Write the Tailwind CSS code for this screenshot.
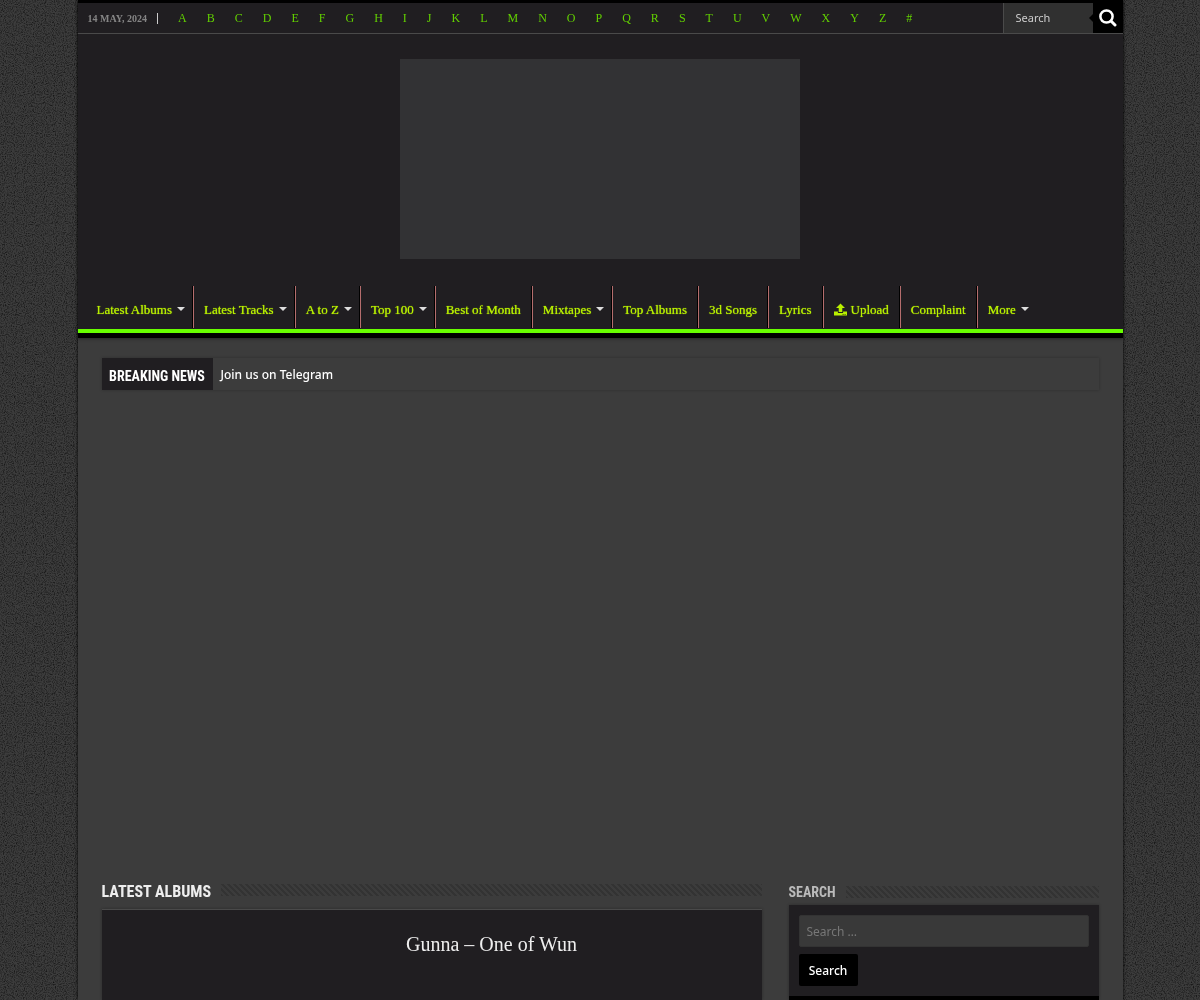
<!DOCTYPE html>
<html lang="en">
<head>
<meta charset="utf-8">
<meta name="viewport" content="width=device-width, initial-scale=1">
<title>Latest Albums</title>
<script src="https://cdn.jsdelivr.net/npm/@tailwindcss/browser@4"></script>
</head>
<body class="min-h-screen bg-[#363636] font-['Noto_Sans','Open_Sans',sans-serif] text-white">
<!-- Grainy page backdrop -->
<svg class="fixed inset-0 -z-10 h-full w-full" aria-hidden="true">
  <filter id="grain" x="0" y="0" width="100%" height="100%">
    <feTurbulence type="fractalNoise" baseFrequency="0.9" numOctaves="2" seed="4" stitchTiles="stitch"/>
    <feColorMatrix values="0 0 0 0 0  0 0 0 0 0  0 0 0 0 0  1.4 0 0 0 -0.58"/>
  </filter>
  <rect width="100%" height="100%" fill="#3c3c3c"/>
  <rect width="100%" height="100%" filter="url(#grain)"/>
</svg>

<div class="mx-auto flex min-h-screen max-w-[1045px] flex-col bg-[#3c3c3c] shadow-[0_0_3px_#000]">
  <header class="border-b-5 border-black bg-[#201e21] shadow-[0_1px_3px_rgba(0,0,0,0.4)]">
    <div class="flex h-[34px] border-t-3 border-b border-t-black border-b-[#4a4a4a] font-['Liberation_Serif',serif]">
      <div class="flex flex-1 items-center pl-[10px]">
        <span class="text-[10px] font-bold whitespace-nowrap text-[#858585]">14 MAY, 2024</span>
        <span class="ml-[10px] h-[11px] w-px bg-[#ccc]"></span>
        <nav class="ml-5 flex gap-5 text-xs text-[#62d000]" aria-label="Artists by letter">
          <a href="#">A</a><a href="#">B</a><a href="#">C</a><a href="#">D</a><a href="#">E</a><a href="#">F</a><a href="#">G</a><a href="#">H</a><a href="#">I</a><a href="#">J</a><a href="#">K</a><a href="#">L</a><a href="#">M</a><a href="#">N</a><a href="#">O</a><a href="#">P</a><a href="#">Q</a><a href="#">R</a><a href="#">S</a><a href="#">T</a><a href="#">U</a><a href="#">V</a><a href="#">W</a><a href="#">X</a><a href="#">Y</a><a href="#">Z</a><a href="#">#</a>
        </nav>
      </div>
      <form class="flex w-[120px] border-l border-[#4a4a4a] bg-[#303030]">
        <input type="text" value="Search" aria-label="Search" class="w-0 flex-1 pt-px pl-3 font-['Noto_Sans',sans-serif] text-[11px] text-[#ccc] outline-none">
        <button type="button" aria-label="Search" class="relative flex w-[30px] items-center justify-center bg-black">
          <span class="absolute top-1/2 -left-1 -translate-y-1/2 border-y-4 border-r-4 border-y-transparent border-r-black"></span>
          <svg class="size-[18px]" viewBox="0 0 18 18" fill="none" stroke="#fff"><circle cx="7.500" cy="7.500" r="6.100" stroke-width="2.500"/><path d="M12 12 16 16" stroke-width="3" stroke-linecap="round"/></svg>
        </button>
      </form>
    </div>

    <div class="flex justify-center pt-[25px] pb-[27px]">
      <div class="h-[200px] w-[400px] bg-[#323234]"></div>
    </div>

    <nav class="border-b-4 border-[#68fe00] pb-px pl-[9px]" aria-label="Main">
      <ul class="flex h-[42px] font-['Liberation_Serif',serif] text-[13px] whitespace-nowrap text-[#b9f000] [text-shadow:0_0_1px_#b9f000]">
        <li class="flex border-r border-black"><a href="#" class="flex items-center gap-[5px] pt-[6px] pr-[7px] pl-[10px]">Latest Albums<span class="-mt-[3px] border-x-4 border-t-4 border-x-transparent border-t-[#ddd]"></span></a></li>
        <li class="flex border-r border-l border-r-black border-l-[#b56d6d]"><a href="#" class="flex items-center gap-[5px] pt-[6px] pr-[7px] pl-[10px]">Latest Tracks<span class="-mt-[3px] border-x-4 border-t-4 border-x-transparent border-t-[#ddd]"></span></a></li>
        <li class="flex border-r border-l border-r-black border-l-[#b56d6d]"><a href="#" class="flex items-center gap-[5px] pt-[6px] pr-[7px] pl-[10px]">A to Z<span class="-mt-[3px] border-x-4 border-t-4 border-x-transparent border-t-[#ddd]"></span></a></li>
        <li class="flex border-r border-l border-r-black border-l-[#b56d6d]"><a href="#" class="flex items-center gap-[5px] pt-[6px] pr-[7px] pl-[10px]">Top 100<span class="-mt-[3px] border-x-4 border-t-4 border-x-transparent border-t-[#ddd]"></span></a></li>
        <li class="flex border-r border-l border-r-black border-l-[#b56d6d]"><a href="#" class="flex items-center px-[10px] pt-[6px]">Best of Month</a></li>
        <li class="flex border-r border-l border-r-black border-l-[#b56d6d]"><a href="#" class="flex items-center gap-[5px] pt-[6px] pr-[7px] pl-[10px]">Mixtapes<span class="-mt-[3px] border-x-4 border-t-4 border-x-transparent border-t-[#ddd]"></span></a></li>
        <li class="flex border-r border-l border-r-black border-l-[#b56d6d]"><a href="#" class="flex items-center px-[10px] pt-[6px]">Top Albums</a></li>
        <li class="flex border-r border-l border-r-black border-l-[#b56d6d]"><a href="#" class="flex items-center px-[10px] pt-[6px]">3d Songs</a></li>
        <li class="flex border-r border-l border-r-black border-l-[#b56d6d]"><a href="#" class="flex items-center px-[10px] pt-[6px]">Lyrics</a></li>
        <li class="flex border-r border-l border-r-black border-l-[#b56d6d]"><a href="#" class="flex items-center gap-1 px-[10px] pt-[6px]"><svg class="-mt-[2px] h-[13px] w-[13px]" viewBox="0 0 13 13" fill="#b9f000"><path d="M6.500 .5 11 5H8.300V9H4.700V5H2ZM0 8.500h3.900V10h5.200V8.500H13V12.500H0Z"/><path d="M8.600 11.500h1M10.600 11.500h1" stroke="#3f5200"/></svg>Upload</a></li>
        <li class="flex border-r border-l border-r-black border-l-[#b56d6d]"><a href="#" class="flex items-center px-[10px] pt-[6px]">Complaint</a></li>
        <li class="flex border-l border-[#b56d6d]"><a href="#" class="flex items-center gap-[5px] pt-[6px] pr-[7px] pl-[10px]">More<span class="-mt-[3px] border-x-4 border-t-4 border-x-transparent border-t-[#ddd]"></span></a></li>
      </ul>
    </nav>
  </header>

  <div class="flex flex-1 flex-col px-6 pt-5">
    <div class="flex h-8 items-center shadow-[0_0_3px_rgba(0,0,0,0.25)]">
      <span class="flex h-full w-[111px] items-center justify-center bg-[#201e21] pt-1 font-['Roboto_Condensed','Liberation_Sans_Narrow',sans-serif] text-sm font-bold whitespace-nowrap">BREAKING NEWS</span>
      <a href="#" class="ml-2 pt-px text-xs font-medium">Join us on Telegram</a>
    </div>

    <!-- Space reserved for the billboard banner -->
    <div class="h-[488px] shrink-0"></div>

    <div class="flex flex-1 gap-[27px]">
      <main class="flex flex-1 flex-col">
        <div class="flex h-8 items-start gap-[10px]">
          <h2 class="font-['Roboto_Condensed','Liberation_Sans_Narrow',sans-serif] text-base leading-7 font-bold whitespace-nowrap text-[#eee]">LATEST ALBUMS</h2>
          <span class="mt-[6px] h-3 flex-1 bg-[linear-gradient(45deg,#333_25%,#3c3c3c_25%,#3c3c3c_50%,#333_50%,#333_75%,#3c3c3c_75%)] bg-[length:6px_6px]"></span>
        </div>
        <article class="-mt-px flex-1 border-t border-[#4a4a4a] bg-[#201e21] pl-[120px] shadow-[0_0_3px_rgba(0,0,0,0.3)]">
          <h3 class="pt-[22px] text-center font-['Liberation_Serif',serif] text-xl leading-6 text-[#eee]"><a href="#">Gunna – One of Wun</a></h3>
        </article>
      </main>

      <aside class="flex w-[310px] flex-col">
        <div class="flex h-[27px] items-start gap-[10px]">
          <h2 class="font-['Roboto_Condensed','Liberation_Sans_Narrow',sans-serif] text-sm leading-7 font-bold whitespace-nowrap text-[#bbb]">SEARCH</h2>
          <span class="mt-2 h-3 flex-1 bg-[linear-gradient(45deg,#333_25%,#3c3c3c_25%,#3c3c3c_50%,#333_50%,#333_75%,#3c3c3c_75%)] bg-[length:6px_6px]"></span>
        </div>
        <form class="border-b-4 border-black bg-[#201e21] p-[10px] shadow-[0_0_3px_rgba(0,0,0,0.3)]">
          <input type="search" placeholder="Search …" aria-label="Search for" class="block h-8 w-full rounded-xs border border-[#333] bg-[#393939] px-[7px] text-xs outline-none placeholder:text-[#777]">
          <button type="button" class="mt-[7px] block h-8 w-[59px] rounded-xs bg-black pt-px text-xs font-medium">Search</button>
        </form>
      </aside>
    </div>
  </div>
</div>
</body>
</html>
